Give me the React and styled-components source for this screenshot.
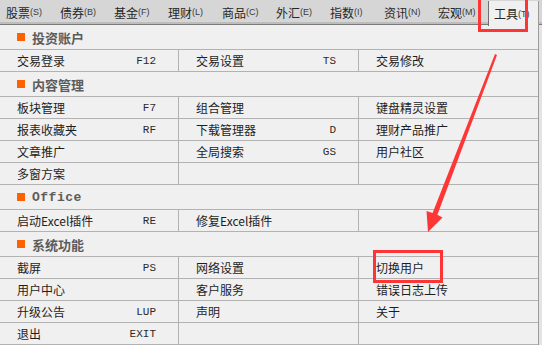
import React from 'react';
import styled, { createGlobalStyle } from 'styled-components';

const GlobalStyle = createGlobalStyle`
  body {
    margin: 0;
    background: #f0f0f0;
    font-family: "Noto Sans CJK SC", "Liberation Sans", sans-serif;
  }
`;

const Screen = styled.div`
  position: relative;
  width: 542px;
  height: 345px;
  overflow: hidden;
  background: #e4e4e4;
`;

const TabBar = styled.div`
  display: flex;
  height: 24px;
  padding-left: 1px;
  background: #d6d6d6;
  border-bottom: 1px solid #7a7a7a;
  box-shadow: inset 0 -2px 0 #bdbdbd;
`;

const Tab = styled.div`
  display: flex;
  align-items: center;
  box-sizing: border-box;
  flex: none;
  width: ${p => (p.$active ? '51px' : '54px')};
  height: ${p => (p.$active ? '25px' : '24px')};
  margin-top: ${p => (p.$active ? '1px' : '0')};
  margin-left: ${p => (p.$active ? '1px' : '0')};
  padding-left: 5px;
  background: ${p => (p.$active ? '#f0f0f0' : 'transparent')};
  border-left: ${p => (p.$active ? '1px solid #6e6e6e' : 'none')};
  border-right: ${p => (p.$active ? '1px solid #9a9a9a' : 'none')};
  color: #262626;
  font-size: 12px;
  white-space: nowrap;
  overflow: hidden;
`;

const TabKey = styled.span`
  font-family: "Liberation Sans", sans-serif;
  font-size: 9px;
  color: #3a3a3a;
`;

const Panel = styled.div`
  width: 538px;
  background: #f0f0f0;
  border-right: 1px solid #9c9c9c;
`;

const SectionHeader = styled.div`
  display: flex;
  align-items: center;
  height: 24px;
  padding-left: 17px;
  border-bottom: 1px solid #b2b2b2;
  color: #5c5c5c;
  font-size: 13px;
  font-weight: 700;
  font-family: ${p => (p.$latin ? '"Liberation Mono", monospace' : '"Noto Sans CJK SC", sans-serif')};
  letter-spacing: ${p => (p.$latin ? '0.5px' : '0')};
`;

const Bullet = styled.span`
  width: 8px;
  height: 8px;
  margin-right: 7px;
  background: #ff6000;
`;

const Row = styled.div`
  display: grid;
  grid-template-columns: 179px 180px 179px;
`;

const Cell = styled.div`
  display: flex;
  align-items: center;
  justify-content: space-between;
  box-sizing: border-box;
  height: 22px;
  padding: 0 22px 0 17px;
  border-bottom: 1px solid #b2b2b2;
  border-right: ${p => (p.$last ? 'none' : '1px solid #b2b2b2')};
  color: #1e1e1e;
  font-size: 12px;
`;

const Shortcut = styled.span`
  font-family: "Liberation Mono", monospace;
  font-size: 11px;
  color: #2a2a2a;
`;

const Highlight = styled.div`
  position: absolute;
  left: ${p => p.$x}px;
  top: ${p => p.$y}px;
  width: ${p => p.$w}px;
  height: ${p => p.$h}px;
  box-sizing: border-box;
  border: 3px solid #ff3535;
  pointer-events: none;
`;

const Overlay = styled.svg`
  position: absolute;
  left: 0;
  top: 0;
  pointer-events: none;
`;

const tabs = [
  ['股票', 'S'], ['债券', 'B'], ['基金', 'F'], ['理财', 'L'], ['商品', 'C'],
  ['外汇', 'E'], ['指数', 'I'], ['资讯', 'N'], ['宏观', 'M'], ['工具', 'T'],
];

const sections = [
  {
    title: '投资账户',
    rows: [[['交易登录', 'F12'], ['交易设置', 'TS'], ['交易修改', '']]],
  },
  {
    title: '内容管理',
    rows: [
      [['板块管理', 'F7'], ['组合管理', ''], ['键盘精灵设置', '']],
      [['报表收藏夹', 'RF'], ['下载管理器', 'D'], ['理财产品推广', '']],
      [['文章推广', ''], ['全局搜索', 'GS'], ['用户社区', '']],
      [['多窗方案', ''], null, null],
    ],
  },
  {
    title: 'Office',
    latin: true,
    rows: [[['启动Excel插件', 'RE'], ['修复Excel插件', ''], null]],
  },
  {
    title: '系统功能',
    rows: [
      [['截屏', 'PS'], ['网络设置', ''], ['切换用户', '']],
      [['用户中心', ''], ['客户服务', ''], ['错误日志上传', '']],
      [['升级公告', 'LUP'], ['声明', ''], ['关于', '']],
      [['退出', 'EXIT'], null, null],
    ],
  },
];

function App() {
  return (
    <Screen>
      <GlobalStyle />
      <TabBar>
        {tabs.map(([name, key], i) => (
          <Tab key={name} $active={i === tabs.length - 1}>
            {name}
            <TabKey>({key})</TabKey>
          </Tab>
        ))}
      </TabBar>
      <Panel>
        {sections.map(section => (
          <div key={section.title}>
            <SectionHeader $latin={section.latin}>
              <Bullet />
              {section.title}
            </SectionHeader>
            {section.rows.map((row, r) => (
              <Row key={r}>
                {row.map((item, c) => (
                  <Cell key={c} $last={c === 2}>
                    <span>{item ? item[0] : ''}</span>
                    {item && item[1] && <Shortcut>{item[1]}</Shortcut>}
                  </Cell>
                ))}
              </Row>
            ))}
          </div>
        ))}
      </Panel>

      <Highlight $x={478} $y={-3} $w={50} $h={35} />
      <Highlight $x={373} $y={250} $w={70} $h={33} />
      <Overlay width="542" height="345" viewBox="0 0 542 345">
        <polygon
          points="495,54 497,55 437.4,214.8 442.5,217.5 428,232 426.5,211 432.6,213"
          fill="#ff3636"
        />
      </Overlay>
    </Screen>
  );
}

export default App;
